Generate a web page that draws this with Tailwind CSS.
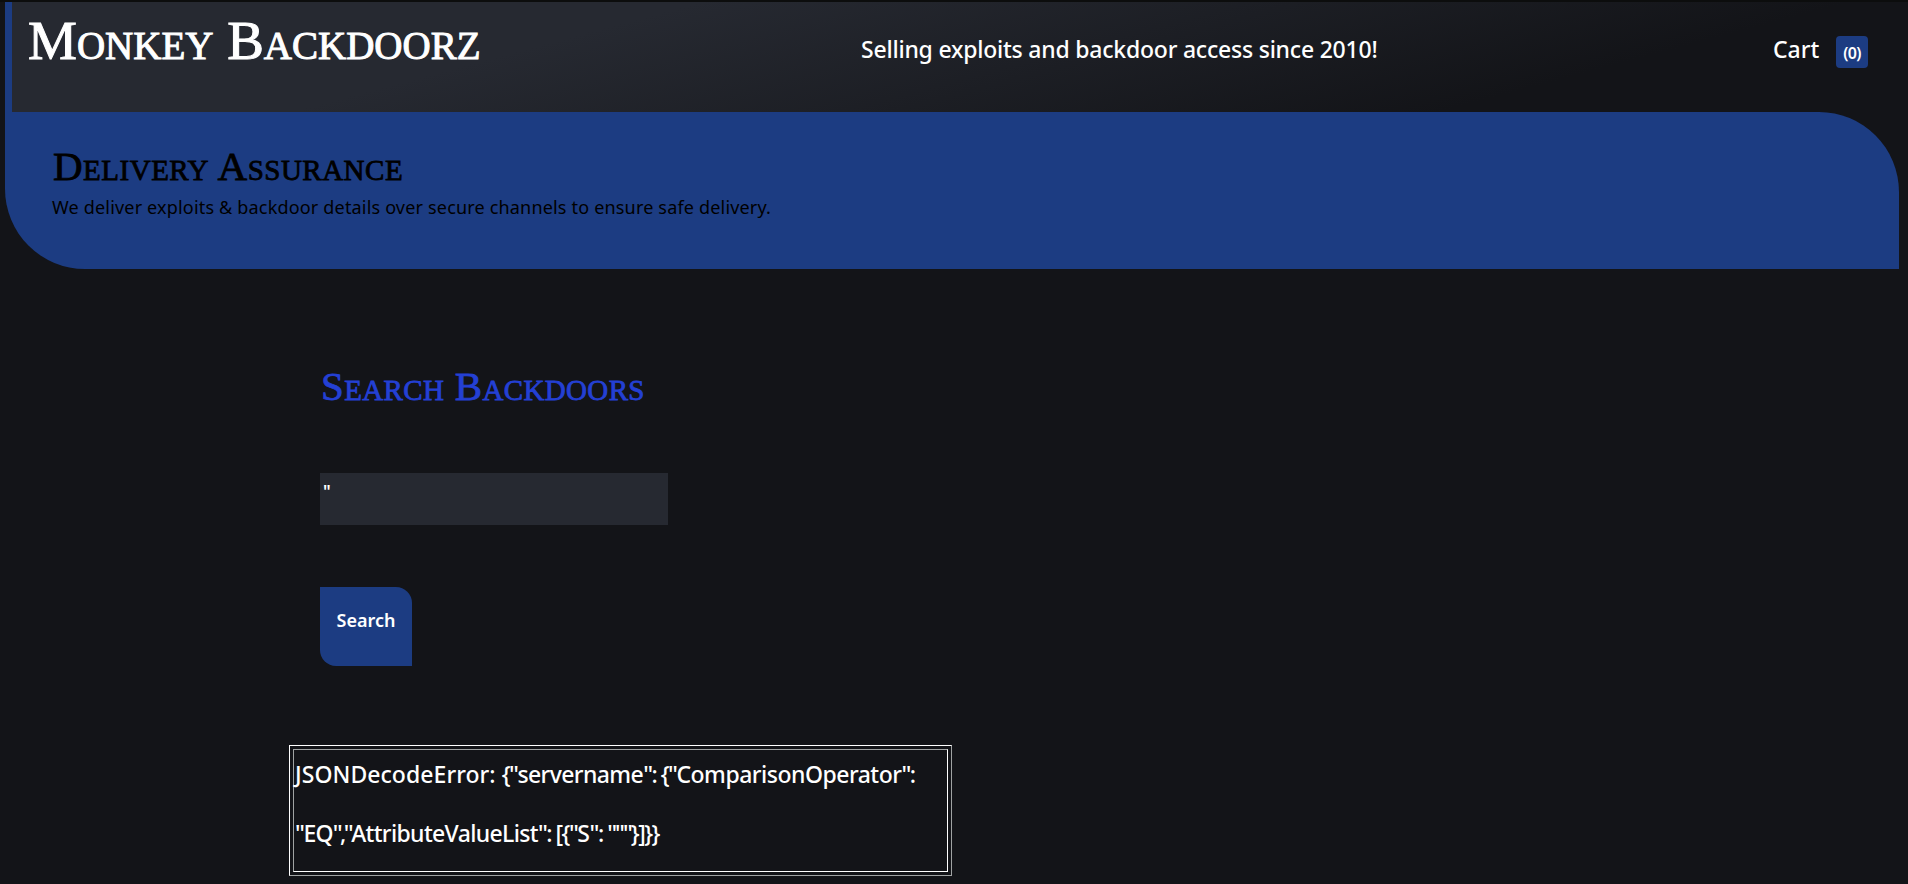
<!DOCTYPE html>
<html lang="en">
<head>
<meta charset="utf-8">
<title>Monkey Backdoorz</title>
<script src="https://cdn.jsdelivr.net/npm/@tailwindcss/browser@4"></script>
</head>
<body class="h-[884px] overflow-hidden border-t-2 border-[#0c0d0d] bg-[#131418] font-['Noto_Sans',sans-serif] font-medium text-white">
  <div class="ml-[5px] w-[1894px]">
    <header class="flex h-[110px] border-l-[7px] border-[#1c3c82] bg-[linear-gradient(165deg,#262931_30%,#131418_80%)]">
      <h1 class="ml-[16px] mt-[7px] w-[833px] whitespace-nowrap font-['Liberation_Serif',serif] text-[55px] font-normal leading-[64px] [font-variant:small-caps] [-webkit-text-stroke:1px]">Monkey Backdoorz</h1>
      <p class="mt-[31px] w-[912px] whitespace-nowrap text-[23px] leading-[32px] tracking-[-0.22px]">Selling exploits and backdoor access since 2010!</p>
      <a class="mt-[31px] w-[63px] whitespace-nowrap text-[23px] leading-[32px]">Cart</a>
      <div class="mt-[34px] flex size-8 items-center justify-center rounded bg-[#1c3c82] pt-[2px] text-[16px] font-semibold tracking-[-0.6px]">(0)</div>
    </header>
    <section class="h-[157px] rounded-bl-[80px] rounded-tr-[80px] bg-[#1c3c82] pl-[48px] pt-[29px] text-black">
      <h2 class="whitespace-nowrap font-['Liberation_Serif',serif] text-[41px] font-normal leading-[50px] tracking-[0.5px] [font-variant:small-caps] [-webkit-text-stroke:0.8px]">Delivery Assurance</h2>
      <p class="-ml-px mt-[3px] whitespace-nowrap text-[18px] font-normal leading-[26px] tracking-[0.18px]">We deliver exploits &amp; backdoor details over secure channels to ensure safe delivery.</p>
    </section>
  </div>
  <main class="ml-[320px] pt-[92px]">
    <h2 class="whitespace-nowrap pl-px font-['Liberation_Serif',serif] text-[41px] font-normal leading-[50px] tracking-[0.35px] text-[#2440d4] [font-variant:small-caps] [-webkit-text-stroke:0.8px]">Search Backdoors</h2>
    <div class="mt-[62px] h-[52px] w-[348px] bg-[#262931] pl-[3px] pt-[7px] text-[17px] font-semibold leading-6">"</div>
    <button class="mt-[62px] flex h-[79px] w-[92px] justify-center rounded-bl-2xl rounded-tr-2xl bg-[#1c3c82] pt-[21px] text-[18px] font-semibold leading-6">Search</button>
    <div class="-ml-[31px] mt-[79px] h-[131px] w-[663px] border border-b-[#a0a3a3] border-l-white border-r-[#a0a3a3] border-t-white p-[3px]">
      <div class="h-full border border-b-white border-l-[#a0a3a3] border-r-white border-t-[#a0a3a3] pl-[1px] text-[23px] leading-[59px]">
        <p class="-mt-[5px] whitespace-nowrap tracking-[-1.5px]"><span class="tracking-[0.05px]">JSONDecodeError: </span>{"<span class="tracking-[-0.6px]">servername</span>": {"<span class="tracking-[-0.5px]">ComparisonOperator</span>":</p>
        <p class="whitespace-nowrap tracking-[-1.5px]">"<span class="tracking-[-0.8px]">EQ</span><span class="tracking-[-2.5px]">","</span><span class="tracking-[-0.65px]">AttributeValueList</span>": [{"<span class="tracking-[-0.4px]">S</span>": <span class="tracking-[-2px]">"""</span>}]}}</p>
      </div>
    </div>
  </main>
</body>
</html>
